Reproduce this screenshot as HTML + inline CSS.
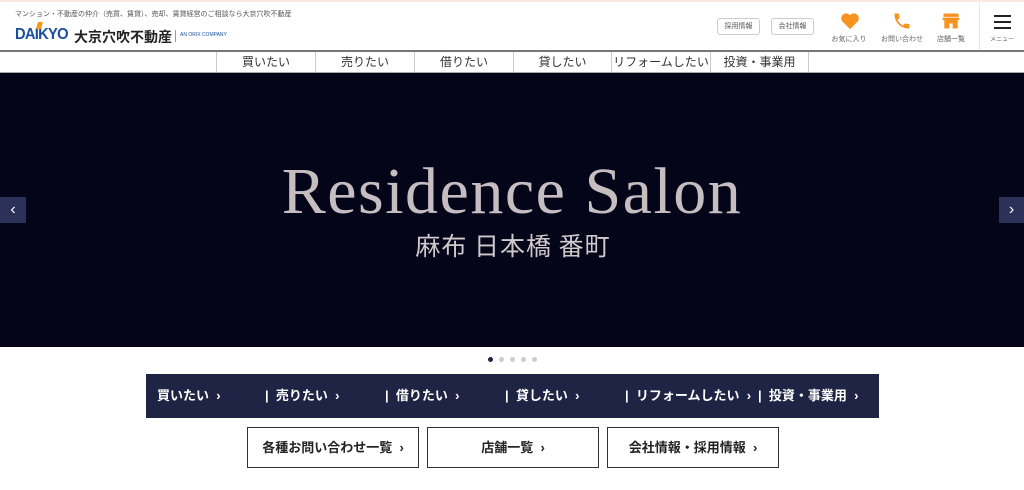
<!DOCTYPE html>
<html><head><meta charset="utf-8"><style>
*{margin:0;padding:0;box-sizing:border-box}
body{width:1024px;height:490px;overflow:hidden;background:#fff;font-family:"Liberation Sans","Noto Sans CJK JP",sans-serif;position:relative;color:#333}
.a{position:absolute}
.nav div{position:absolute;top:52px;height:20px;border-left:1px solid #ccc;font-size:12px;line-height:20px;text-align:center;color:#333;white-space:nowrap}
.bar span{position:absolute;top:0;line-height:44px;font-size:13px;font-weight:bold;color:#fff;white-space:nowrap}
.btn{position:absolute;top:427px;height:41px;border:1px solid #333;font-size:13px;font-weight:bold;text-align:center;line-height:39px;color:#222}
.sm{position:absolute;top:18px;height:17px;border:1px solid #ccc;border-radius:3px;font-size:7px;line-height:15px;text-align:center;color:#555}
.ic{position:absolute;top:34px;font-size:7px;color:#666;text-align:center;width:50px}
</style></head><body>
<div class="a" style="left:0;top:0;width:1024px;height:2px;background:#fbe9df"></div>
<div class="a" style="left:15px;top:9px;font-size:7px;color:#555">マンション・不動産の仲介（売買、賃貸）、売却、賃貸経営のご相談なら大京穴吹不動産</div>
<div class="a" style="left:15px;top:26px;font-size:16px;font-weight:bold;color:#1d4fa0;letter-spacing:-0.8px;transform:scaleX(0.92);transform-origin:left">DAIKYO</div>
<div class="a" style="left:37px;top:22px;width:5px;height:7px;background:#f39a1e;transform:skewX(-15deg)"></div>
<div class="a" style="left:74px;top:27px;font-size:14px;font-weight:bold;color:#222">大京穴吹不動産</div>
<div class="a" style="left:175px;top:30px;width:1px;height:12px;background:#999"></div>
<div class="a" style="left:180px;top:32px;font-size:5px;color:#1d4fa0">AN ORIX COMPANY</div>
<div class="sm" style="left:717px;width:43px">採用情報</div>
<div class="sm" style="left:771px;width:43px">会社情報</div>
<svg class="a" style="left:840px;top:12px" width="20" height="18" viewBox="0 0 24 22"><path d="M12 21 L2.5 11.5 A5.5 5.5 0 0 1 12 4 A5.5 5.5 0 0 1 21.5 11.5 Z" fill="#f7931e"/></svg>
<svg class="a" style="left:892px;top:11px" width="20" height="20" viewBox="0 0 24 24"><path d="M6.6 10.8c1.4 2.8 3.8 5.1 6.6 6.6l2.2-2.2c.3-.3.7-.4 1-.2 1.1.4 2.3.6 3.6.6.6 0 1 .4 1 1V20c0 .6-.4 1-1 1C10.6 21 3 13.4 3 4c0-.6.4-1 1-1h3.5c.6 0 1 .4 1 1 0 1.3.2 2.5.6 3.6.1.3 0 .7-.2 1z" fill="#f7931e"/></svg>
<svg class="a" style="left:941px;top:11px" width="20" height="20" viewBox="0 0 24 24"><path d="M3 3h18v4H3z M2 8h20v3H2z M4 11h16v10h-6v-6H10v6H4z" fill="#f7931e"/></svg>
<div class="ic" style="left:824px">お気に入り</div>
<div class="ic" style="left:877px">お問い合わせ</div>
<div class="ic" style="left:926px">店舗一覧</div>
<div class="a" style="left:979px;top:3px;width:1px;height:48px;background:#e5e5e5"></div>
<div class="a" style="left:994px;top:15px;width:17px;height:2px;background:#222;box-shadow:0 6px 0 #222,0 12px 0 #222"></div>
<div class="a" style="left:990px;top:34px;font-size:6px;color:#666">メニュー</div>
<div class="a" style="left:0;top:50px;width:1024px;height:2px;background:#777"></div>
<div class="nav">
<div style="left:216px;width:99px">買いたい</div>
<div style="left:315px;width:99px">売りたい</div>
<div style="left:414px;width:99px">借りたい</div>
<div style="left:513px;width:98px">貸したい</div>
<div style="left:611px;width:99px">リフォームしたい</div>
<div style="left:710px;width:99px;border-right:1px solid #ccc">投資・事業用</div>
</div>
<div class="a" style="left:0;top:72px;width:1024px;height:1px;background:#aaa"></div>
<div class="a" style="left:0;top:73px;width:1024px;height:274px;background:#05051a"></div>
<div class="a" style="left:0;top:152px;width:1024px;text-align:center;font-family:'Liberation Serif',serif;font-size:66px;line-height:80px;color:#c6bdc0;letter-spacing:1.5px">Residence Salon</div>
<div class="a" style="left:0;top:228px;width:1024px;text-align:center;font-family:'Noto Sans CJK JP',sans-serif;font-size:25px;line-height:34px;color:#cfc9cc;letter-spacing:1px;padding-left:2px">麻布 日本橋 番町</div>
<div class="a" style="left:0;top:197px;width:26px;height:26px;background:#2b3158;color:#fff;font-size:16px;text-align:center;line-height:26px">‹</div>
<div class="a" style="left:999px;top:197px;width:25px;height:26px;background:#2b3158;color:#fff;font-size:16px;text-align:center;line-height:26px">›</div>
<div class="a" style="left:488px;top:357px;width:5px;height:5px;border-radius:50%;background:#1f2444"></div>
<div class="a" style="left:499px;top:357px;width:5px;height:5px;border-radius:50%;background:#ccc;box-shadow:11px 0 0 #ccc,22px 0 0 #ccc,33px 0 0 #ccc"></div>
<div class="a bar" style="left:146px;top:374px;width:733px;height:44px;background:#1f2444">
<span style="left:11px">買いたい &nbsp;›</span>
<span style="left:119px">| &nbsp;売りたい &nbsp;›</span>
<span style="left:239px">| &nbsp;借りたい &nbsp;›</span>
<span style="left:359px">| &nbsp;貸したい &nbsp;›</span>
<span style="left:479px">| &nbsp;リフォームしたい &nbsp;›</span>
<span style="left:612px">| &nbsp;投資・事業用 &nbsp;›</span>
</div>
<div class="btn" style="left:247px;width:172px">各種お問い合わせ一覧 &nbsp;›</div>
<div class="btn" style="left:427px;width:172px">店舗一覧 &nbsp;›</div>
<div class="btn" style="left:607px;width:172px">会社情報・採用情報 &nbsp;›</div>
</body></html>
